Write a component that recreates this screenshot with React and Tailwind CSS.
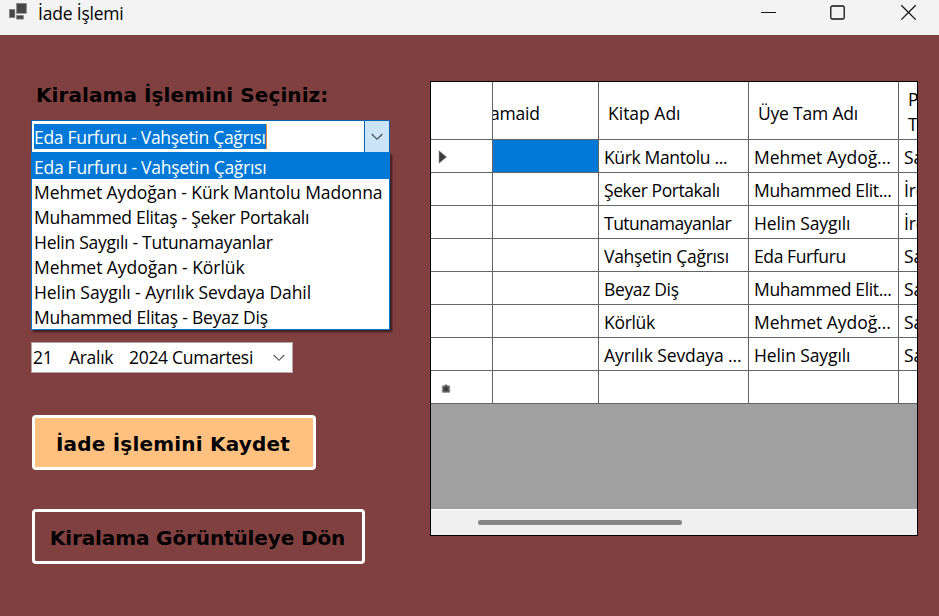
const rentals = [
  { text: "Eda Furfuru - Vahşetin Çağrısı", track: "tracking-[-0.27px]" },
  { text: "Mehmet Aydoğan - Kürk Mantolu Madonna", track: "tracking-[-0.09px]" },
  { text: "Muhammed Elitaş - Şeker Portakalı", track: "tracking-[-0.27px]" },
  { text: "Helin Saygılı - Tutunamayanlar", track: "tracking-[-0.27px]" },
  { text: "Mehmet Aydoğan - Körlük", track: "tracking-[-0.04px]" },
  { text: "Helin Saygılı - Ayrılık Sevdaya Dahil", track: "tracking-[-0.08px]" },
  { text: "Muhammed Elitaş - Beyaz Diş", track: "tracking-[-0.22px]" },
];

const books = [
  { text: "Kürk Mantolu ...", track: "tracking-[-0.35px]" },
  { text: "Şeker Portakalı", track: "tracking-[-0.43px]" },
  { text: "Tutunamayanlar", track: "tracking-[-0.5px]" },
  { text: "Vahşetin Çağrısı", track: "tracking-[-0.3px]" },
  { text: "Beyaz Diş", track: "tracking-[-0.35px]" },
  { text: "Körlük", track: "tracking-[-0.3px]" },
  { text: "Ayrılık Sevdaya ...", track: "tracking-[-0.1px]" },
  { text: "", track: "" },
];

const mehmet = { text: "Mehmet Aydoğ...", track: "tracking-[-0.05px]" };
const muhammed = { text: "Muhammed Elit...", track: "tracking-[-0.35px]" };
const helin = { text: "Helin Saygılı", track: "tracking-[-0.1px]" };
const eda = { text: "Eda Furfuru", track: "tracking-[-0.4px]" };
const members = [mehmet, muhammed, helin, eda, muhammed, mehmet, helin, { text: "", track: "" }];
const staff = ["Sa", "İre", "İre", "Sa", "Sa", "Sa", "Sa", ""];

function Chevron({ color }) {
  return (
    <svg width="12" height="8" viewBox="0 0 12 8" fill="none" stroke={color} strokeWidth="1.1">
      <path d="M0.7 1 L6 6.3 L11.3 1" />
    </svg>
  );
}

function TitleBar() {
  return (
    <header className="flex h-[35px] shrink-0 items-start bg-[#f3f3f3]">
      <svg className="ml-[8px] mt-[2px]" width="20" height="19" viewBox="0 0 20 19" fill="#484848" stroke="#8a8a8a" strokeWidth="0.6">
        <rect x="8.5" y="1.3" width="10" height="10" />
        <rect x="1.3" y="7.3" width="5.6" height="8.4" />
        <rect x="8.5" y="13.3" width="7" height="3.8" />
      </svg>
      <h1 className="ml-[10px] text-[17.5px] leading-[27px] tracking-[-0.2px]">İade İşlemi</h1>
      <div className="ml-auto flex">
        <svg width="179" height="26" viewBox="0 0 179 26" fill="none" stroke="#111" strokeWidth="1.3">
          <path d="M1 12.5 H16" strokeWidth="1" />
          <rect x="70.8" y="6" width="13.4" height="13" rx="1.6" />
          <path d="M141.3 5.2 L155.7 19.6 M155.7 5.2 L141.3 19.6" />
        </svg>
      </div>
    </header>
  );
}

function ComboBox() {
  return (
    <div className="relative mt-[12px] flex h-[33px] w-[359px] border border-[#0a64ad] bg-white">
      <div className="flex flex-1 items-center pl-[2px]">
        <span className="h-[25px] w-[233px] whitespace-nowrap border-r border-[#e08a3c] bg-[#0078d7] text-[17.5px] leading-[26px] tracking-[-0.29px] text-white">
          Eda Furfuru - Vahşetin Çağrısı
        </span>
      </div>
      <div className="flex w-[25px] items-center justify-center border-l border-[#0a64ad] bg-[#cce4f7]">
        <Chevron color="#444" />
      </div>
      <ul className="absolute left-[-1px] top-[31px] z-10 h-[178px] w-[359px] border border-[#0078d7] bg-white shadow-[2px_2px_2px_rgba(0,0,0,0.55)]">
        {rentals.map((r, i) => (
          <li
            key={r.text}
            className={`whitespace-nowrap pl-[2px] text-[17.5px] ${r.track} ${i === 0 ? "h-[26px] bg-[#0078d7] leading-[29px] text-white" : "h-[25px] leading-[27px]"}`}
          >
            {r.text}
          </li>
        ))}
      </ul>
    </div>
  );
}

function DatePicker() {
  return (
    <div className="mt-[189px] flex h-[31px] w-[262px] items-center border border-[#b9a5a5] bg-white text-[17.5px] leading-[31px] tracking-[-0.3px]">
      <span className="ml-px w-[36px]">21</span>
      <span className="w-[60px]">Aralık</span>
      <span className="whitespace-nowrap">2024 Cumartesi</span>
      <span className="ml-auto mr-[7px]"><Chevron color="#555" /></span>
    </div>
  );
}

function Grid() {
  const cell = "shrink-0 overflow-hidden whitespace-nowrap border-b border-r border-[#646464]";
  return (
    <section className="mt-[46px] flex h-[455px] w-[488px] flex-col overflow-hidden border border-black bg-[#a0a0a0] text-[17.5px] tracking-[-0.2px]">
      <div className="flex h-[58px] shrink-0 overflow-hidden bg-white leading-[62px]">
        <div className={`${cell} w-[62px]`} />
        <div className={`${cell} flex w-[106px]`}><span className="-ml-[3px]">amaid</span></div>
        <div className={`${cell} w-[150px] pl-[9px] tracking-normal`}>Kitap Adı</div>
        <div className={`${cell} w-[150px] pl-[9px]`}>Üye Tam Adı</div>
        <div className={`${cell} w-[60px] pl-[9px] pt-[5px] leading-[25px]`}>Per<br />Tam</div>
      </div>
      {books.map((book, i) => (
        <div key={i} className="flex h-[33px] shrink-0 overflow-hidden bg-white leading-[35px]">
          <div className={`${cell} flex w-[62px] items-center`}>
            {i === 0 && (
              <svg className="ml-[7px] mt-[2px]" width="10" height="14" viewBox="0 0 10 14" fill="#3c3c3c" stroke="#999" strokeWidth="0.6"><path d="M1 0.7 L8.6 7 L1 13.3 Z" /></svg>
            )}
            {i === 7 && (
              <svg className="ml-[10px] mt-[3px]" width="10" height="10" viewBox="0 0 10 10" fill="#5a5a5a" stroke="#9a9a9a" strokeWidth="0.8"><path d="M4 0.8 H6 L6.6 1.8 H8.5 L9 4 L8.3 5 L9 6.5 L8.5 8.4 H1.5 L1 6.5 L1.7 5 L1 4 L1.5 1.8 H3.4 Z" /><circle cx="5" cy="5" r="2" fill="#3a3a3a" stroke="none" /></svg>
            )}
          </div>
          <div className={`${cell} w-[106px] ${i === 0 ? "bg-[#0078d7]" : ""}`} />
          <div className={`${cell} w-[150px] pl-[5px] ${book.track}`}>{book.text}</div>
          <div className={`${cell} w-[150px] pl-[5px] ${members[i].track}`}>{members[i].text}</div>
          <div className={`${cell} w-[60px] pl-[5px]`}>{staff[i]}</div>
        </div>
      ))}
      <div className="mt-auto flex h-[26px] shrink-0 items-start border-t border-white bg-[#f0f0f0]">
        <div className="ml-[47px] mt-[10px] h-[5px] w-[204px] rounded-full bg-[#858585]" />
      </div>
    </section>
  );
}

export default function App() {
  return (
    <div className="flex h-[616px] w-[939px] flex-col overflow-hidden bg-[#804040] font-['Open_Sans','Noto_Sans',sans-serif] text-black">
      <TitleBar />
      <main className="flex flex-1 items-start">
        <div className="ml-[31px] flex w-[399px] flex-col items-start pt-[46px]">
          <label className="ml-[5px] h-[27px] whitespace-nowrap font-['DejaVu_Sans',sans-serif] text-[20px] font-bold leading-[29px] tracking-[0.08px]">
            Kiralama İşlemini Seçiniz:
          </label>
          <ComboBox />
          <DatePicker />
          <button className="ml-px mt-[42px] h-[55px] w-[284px] whitespace-nowrap rounded-[4px] border-[3px] border-white bg-[#ffc080] pr-[2px] pt-[2px] font-['DejaVu_Sans',sans-serif] text-[20px] font-bold tracking-[0.2px]">
            İade İşlemini Kaydet
          </button>
          <button className="ml-px mt-[39px] h-[55px] w-[333px] whitespace-nowrap rounded-[4px] border-[3px] border-white pr-[2px] pt-[2px] font-['DejaVu_Sans',sans-serif] text-[20px] font-bold tracking-[-0.12px]">
            Kiralama Görüntüleye Dön
          </button>
        </div>
        <Grid />
      </main>
    </div>
  );
}
